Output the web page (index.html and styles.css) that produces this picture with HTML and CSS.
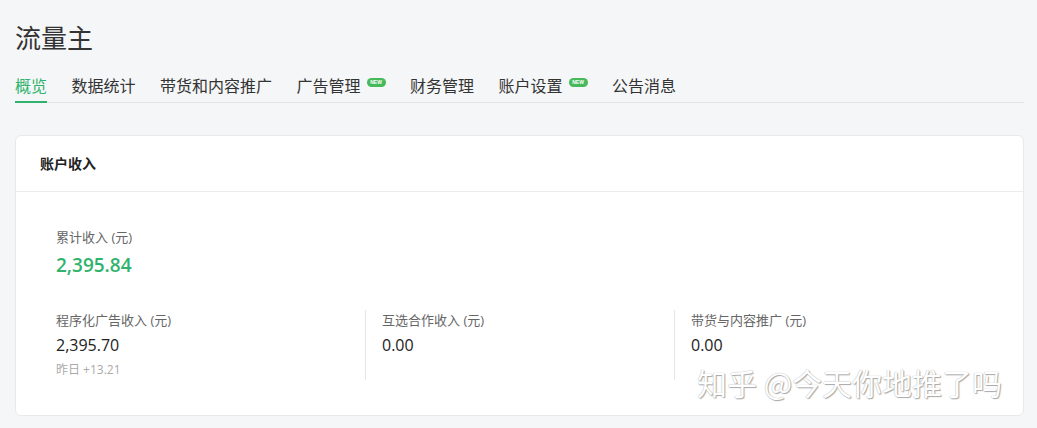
FILE: index.html
```html
<!DOCTYPE html>
<html lang="zh-CN">
<head>
<meta charset="utf-8">
<title>流量主</title>
<link rel="stylesheet" href="styles.css">
</head>
<body>
<div class="page">
  <h1 class="title">流量主</h1>
  <nav class="tabs">
    <a class="tab active">概览</a>
    <a class="tab">数据统计</a>
    <a class="tab">带货和内容推广</a>
    <a class="tab">广告管理<span class="badge">NEW</span></a>
    <a class="tab">财务管理</a>
    <a class="tab">账户设置<span class="badge">NEW</span></a>
    <a class="tab">公告消息</a>
  </nav>
  <section class="card">
    <header class="card-head">账户收入</header>
    <div class="card-body">
      <div class="total-label">累计收入 (元)</div>
      <div class="total-value">2,395.84</div>
      <div class="cols">
        <div class="col">
          <div class="col-label">程序化广告收入 (元)</div>
          <div class="col-value">2,395.70</div>
          <div class="col-sub">昨日 +13.21</div>
        </div>
        <div class="col divided">
          <div class="col-label">互选合作收入 (元)</div>
          <div class="col-value">0.00</div>
        </div>
        <div class="col divided">
          <div class="col-label">带货与内容推广 (元)</div>
          <div class="col-value">0.00</div>
        </div>
      </div>
    </div>
  </section>
</div>
<div class="watermark">知乎 @今天你地推了吗</div>
</body>
</html>
```
FILE: styles.css
```css
html, body {
  margin: 0;
  padding: 0;
  background: #f5f6f7;
  font-family: "Open Sans", "Noto Sans CJK SC", sans-serif;
  color: #333;
}
.page {
  padding: 20px 13px 0 15px;
}
.title {
  margin: 0;
  font-size: 26px;
  line-height: 36px;
  font-weight: normal;
  color: #333;
}
.tabs {
  margin-top: 20px;
  display: flex;
  gap: 24.5px;
  border-bottom: 1px solid #e3e4e6;
}
.tab {
  display: flex;
  align-items: flex-start;
  font-size: 16px;
  line-height: 20px;
  padding-bottom: 5px;
  border-bottom: 2px solid transparent;
  margin-bottom: -1px;
  color: #333;
  cursor: pointer;
}
.tab.active {
  color: #2fb36c;
  border-bottom-color: #2fb36c;
}
.badge {
  margin-left: 6px;
  margin-top: 2px;
  width: 19px;
  height: 9px;
  border-radius: 5px;
  background: #46b95a;
  color: #fff;
  font-size: 5px;
  line-height: 9px;
  font-weight: bold;
  text-align: center;
  font-family: "Liberation Sans", sans-serif;
}
.card {
  margin-top: 32px;
  background: #fff;
  border: 1px solid #e8e9eb;
  border-radius: 6px;
}
.card-head {
  height: 55px;
  line-height: 55px;
  padding-left: 24px;
  font-size: 14px;
  font-weight: bold;
  color: #222;
  border-bottom: 1px solid #ececec;
}
.card-body {
  padding: 35px 40px 35px 40px;
}
.total-label {
  font-size: 13px;
  line-height: 20px;
  color: #666;
}
.total-value {
  margin-top: 5px;
  font-size: 19px;
  line-height: 26px;
  font-weight: 600;
  color: #2fb36c;
}
.cols {
  margin-top: 32px;
  display: grid;
  grid-template-columns: 1fr 1fr 1fr;
}
.col.divided {
  border-left: 1px solid #e6e6e6;
  padding-left: 16px;
}
.col-label {
  font-size: 13px;
  line-height: 20px;
  color: #666;
}
.col-value {
  margin-top: 3px;
  font-size: 16px;
  line-height: 24px;
  color: #222;
}
.col-sub {
  margin-top: 3px;
  font-size: 12px;
  line-height: 20px;
  color: #aaa;
}
.watermark {
  position: absolute;
  left: 697px;
  top: 362px;
  font-size: 30px;
  line-height: 40px;
  color: #fff;
  font-family: "Noto Sans CJK SC", sans-serif;
  text-shadow: 0 0 1px #999, 1px 1px 1px #aaa;
  white-space: nowrap;
}
```
